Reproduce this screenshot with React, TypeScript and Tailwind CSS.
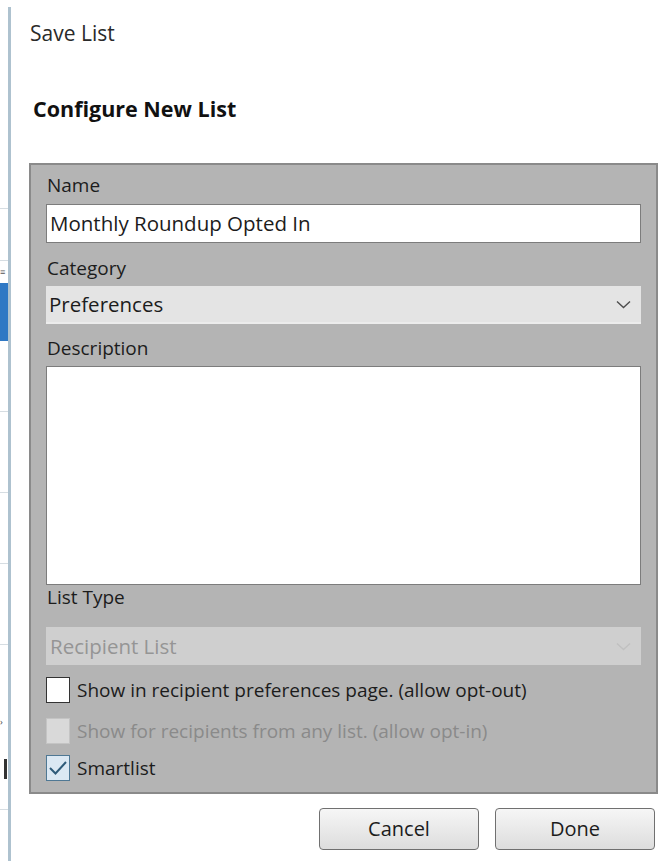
import { ReactNode } from "react";

const font = { fontFamily: '"Open Sans", "Noto Sans", sans-serif' };

function Chevron({ faded }: { faded?: boolean }) {
  return (
    <svg width="15" height="9" viewBox="0 0 15 9" className="shrink-0">
      <path d="M1 1.5 L7.5 7.5 L14 1.5" fill="none" stroke={faded ? "#c0c0c0" : "#4d4d4d"} strokeWidth="1.4" />
    </svg>
  );
}

function Checkbox({ state, children }: { state: "off" | "disabled" | "on"; children: ReactNode }) {
  const box =
    state === "on"
      ? "bg-[#dbe8f3] border-[#4f7894]"
      : state === "disabled"
      ? "bg-[#d9d9d9] border-[#c4c4c4]"
      : "bg-white border-[#333333]";
  return (
    <div className="flex items-center h-[28px] gap-[7px]">
      <div className={`w-[24px] h-[26px] border flex items-center justify-center ${box}`}>
        {state === "on" && (
          <svg width="20" height="16" viewBox="0 0 20 16">
            <path d="M2 8 L7.5 13.5 L18 2" fill="none" stroke="#2f5b79" strokeWidth="2" />
          </svg>
        )}
      </div>
      <span className={`text-[19px] leading-[28px] ${state === "disabled" ? "text-[#8a8a8a]" : "text-[#1c1c1c]"}`}>
        {children}
      </span>
    </div>
  );
}

function Label({ children, className = "" }: { children: ReactNode; className?: string }) {
  return <div className={`text-[19px] text-[#1c1c1c] pl-[1px] ${className}`}>{children}</div>;
}

// cropped edge of the window behind the dialog
function LeftStrip() {
  return (
    <div className="flex w-[12px] shrink-0">
      <div className="w-[8px] flex flex-col overflow-hidden">
        <div className="h-[208px]" />
        <div className="h-px bg-[#d6dde2]" />
        <div className="h-[51px]" />
        <div className="h-px bg-[#d6dde2]" />
        <div className="h-[22px] text-[9px] leading-[22px] text-[#555]">≡</div>
        <div className="h-[58px] bg-[#2f78c4]" />
        <div className="h-[70px]" />
        <div className="h-px bg-[#d6dde2]" />
        <div className="h-[80px]" />
        <div className="h-px bg-[#d6dde2]" />
        <div className="h-[70px]" />
        <div className="h-px bg-[#d6dde2]" />
        <div className="h-[80px]" />
        <div className="h-px bg-[#d6dde2]" />
        <div className="h-[70px]" />
        <div className="h-[14px] text-[9px] leading-[14px] text-[#444]">›</div>
        <div className="h-[30px]" />
        <div className="h-[20px] w-[3px] ml-[4px] bg-[#333]" />
        <div className="h-[30px]" />
        <div className="h-px bg-[#d6dde2]" />
      </div>
      <div className="w-[3px] mt-[7px] bg-[#aec2cf]" />
      <div className="w-px" />
    </div>
  );
}

export default function App() {
  return (
    <div className="flex min-h-[861px] bg-white" style={font}>
      <LeftStrip />
      <div className="pl-[17px] pt-[18px]">
        <div className="text-[21px] leading-[30px] text-[#2a2a2a] ml-px">Save List</div>
        <div className="text-[21.5px] leading-[30px] font-bold text-[#111] ml-[4px] mt-[46px]">Configure New List</div>

        <div className="mt-[39px] w-[629px] border-2 border-[#8a8a8a] bg-[#b4b4b4] px-[15px] pt-[6px] pb-[10px]">
          <Label className="leading-[28px]">Name</Label>
          <div className="mt-[5px] h-[39px] bg-white border border-[#7c7c7c] pl-[3px] flex items-center text-[20.5px] text-[#1c1c1c]">
            Monthly Roundup Opted In
          </div>

          <Label className="mt-[11px] leading-[28px]">Category</Label>
          <div className="mt-[4px] h-[38px] bg-[#e4e4e4] border-b-2 border-[#ececec] pl-[3px] pr-[10px] flex items-center justify-between text-[20.5px] text-[#1c1c1c]">
            <span>Preferences</span>
            <Chevron />
          </div>

          <Label className="mt-[10px] leading-[28px]">Description</Label>
          <div className="mt-[4px] h-[219px] bg-white border border-[#7c7c7c]" />

          <Label className="leading-[24px]">List Type</Label>
          <div className="mt-[18px] h-[38px] bg-[#cfcfcf] pl-[4px] pr-[10px] flex items-center justify-between text-[20.5px] text-[#959595]">
            <span>Recipient List</span>
            <Chevron faded />
          </div>

          <div className="mt-[11px]">
            <Checkbox state="off">Show in recipient preferences page. (allow opt-out)</Checkbox>
          </div>
          <div className="mt-[13px]">
            <Checkbox state="disabled">Show for recipients from any list. (allow opt-in)</Checkbox>
          </div>
          <div className="mt-[9px]">
            <Checkbox state="on">Smartlist</Checkbox>
          </div>
        </div>

        <div className="mt-[14px] flex justify-end gap-[16px] pr-[3px]">
          {["Cancel", "Done"].map((b) => (
            <button
              key={b}
              className="w-[160px] h-[42px] rounded-[4px] border border-[#707070] bg-gradient-to-b from-[#f6f6f6] to-[#dddddd] text-[20px] text-[#1c1c1c]"
            >
              {b}
            </button>
          ))}
        </div>
      </div>
    </div>
  );
}
